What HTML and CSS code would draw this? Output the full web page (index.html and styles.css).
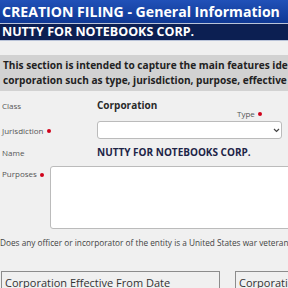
FILE: index.html
```html
<!DOCTYPE html>
<html lang="en">
<head>
    <meta charset="UTF-8">
    <title>Creation Filing</title>
    <link rel="stylesheet" href="styles.css">
</head>
<body>
    <div class="page">
        <div class="title-bar">CREATION FILING - General Information</div>
        <div class="entity-bar">NUTTY FOR NOTEBOOKS CORP.</div>
        <div class="spacer"></div>

        <!-- intro note -->
        <div class="intro">
            This section is intended to capture the main features identifying the<br>
            corporation such as type, jurisdiction, purpose, effective date and more.
        </div>

        <div class="form">
            <div class="row first">
                <span class="label">Class</span>
                <span class="value">Corporation</span>
                <span class="label type-label">Type <i class="req"></i></span>
            </div>
            <div class="row second">
                <span class="label">Jurisdiction <i class="req"></i></span>
                <div class="select">
                    <svg width="7" height="5" viewBox="0 0 7 5"><path d="M1 1l2.5 2.5L6 1" fill="none" stroke="#444" stroke-width="1.2"/></svg>
                </div>
            </div>
            <div class="row third">
                <span class="label">Name</span>
                <span class="value name">NUTTY FOR NOTEBOOKS CORP.</span>
            </div>
            <div class="row purposes">
                <span class="label">Purposes <i class="req"></i></span>
                <div class="textarea"></div>
            </div>
            <p class="question">Does any officer or incorporator of the entity is a United States war veteran?</p>
            <div class="dates">
                <div class="date-box">Corporation Effective From Date</div>
                <div class="date-box">Corporation Effective To Date</div>
            </div>
        </div>
    </div>
</body>
</html>
```

FILE: styles.css
```css
body {
    margin: 0;
    background-color: #f0f0f0;
    font-family: "Open Sans", Arial, sans-serif;
    overflow: hidden;
}

.page {
    width: 420px;
}

.title-bar {
    height: 23px;
    background: linear-gradient(#2151b8, #0f3894);
    color: #ffffff;
    font-size: 14.1px;
    font-weight: bold;
    line-height: 24px;
    padding-left: 2px;
    white-space: nowrap;
    border-bottom: 1px solid #b9c3d8;
}

.entity-bar {
    height: 16px;
    background-color: #0c1f52;
    color: #ffffff;
    font-size: 12.5px;
    font-weight: bold;
    line-height: 16px;
    padding-left: 2px;
    white-space: nowrap;
    border-bottom: 1px solid #b9c3d8;
}

.spacer {
    height: 14px;
    background-color: #f0f0f0;
}

.intro {
    height: 36px;
    box-sizing: border-box;
    background-color: #d2d2d2;
    color: #222222;
    font-size: 10.1px;
    font-weight: bold;
    line-height: 15px;
    padding: 3px 3px 0;
    white-space: nowrap;
}

.row {
    display: flex;
    align-items: center;
}

.first {
    height: 28px;
}

.second {
    height: 22px;
}

.third {
    height: 22px;
}

.label {
    width: 97px;
    flex-shrink: 0;
    padding-left: 2px;
    box-sizing: border-box;
    color: #555555;
    font-size: 8px;
}

.req {
    display: inline-block;
    width: 4px;
    height: 4px;
    border-radius: 50%;
    background-color: #d0021b;
    vertical-align: middle;
    margin-left: 1px;
}

.value {
    width: 140px;
    flex-shrink: 0;
    color: #2a2a2a;
    font-size: 10px;
    font-weight: bold;
}

.name {
    width: auto;
    color: #1d2447;
}

.type-label {
    width: auto;
    padding-left: 0;
    padding-top: 16px;
}

.select {
    width: 185px;
    height: 18px;
    box-sizing: border-box;
    background-color: #ffffff;
    border: 1px solid #bbbbbb;
    border-radius: 3px;
    display: flex;
    align-items: center;
    justify-content: flex-end;
    padding-right: 1px;
}

.purposes {
    align-items: flex-start;
    margin-top: 3px;
}

.purposes .label {
    width: 50px;
    padding-top: 2px;
}

.textarea {
    width: 260px;
    height: 63px;
    box-sizing: border-box;
    background-color: #ffffff;
    border: 1px solid #bbbbbb;
    border-radius: 3px;
}

.question {
    margin: 8px 0 0;
    font-size: 8.25px;
    line-height: 12px;
    color: #444444;
    white-space: nowrap;
}

.dates {
    display: flex;
    gap: 15px;
    margin-top: 22px;
    padding-left: 1px;
}

.date-box {
    width: 219px;
    height: 30px;
    flex-shrink: 0;
    box-sizing: border-box;
    border: 1px solid #8c8c8c;
    padding: 3px 3px;
    font-size: 11px;
    color: #333333;
    white-space: nowrap;
}
```
